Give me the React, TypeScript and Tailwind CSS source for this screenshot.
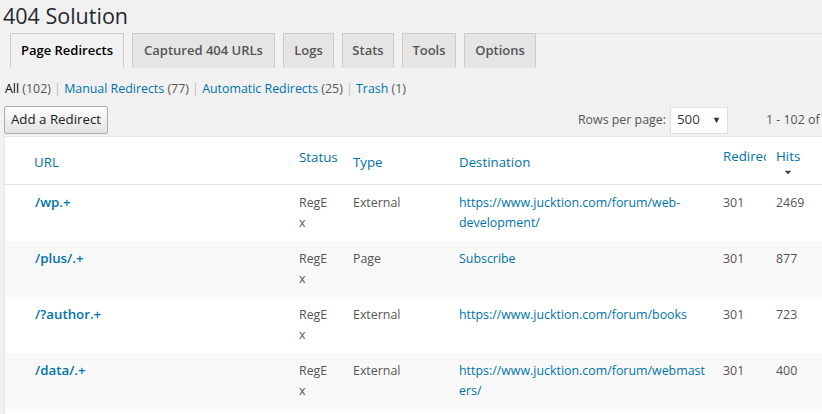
import { FaCaretDown } from "react-icons/fa";

const tabs = [
  { label: "Page Redirects", w: "w-[114px]", active: true },
  { label: "Captured 404 URLs", w: "w-[143px]" },
  { label: "Logs", w: "w-[51px]" },
  { label: "Stats", w: "w-[52px]" },
  { label: "Tools", w: "w-[54px]" },
  { label: "Options", w: "w-[72px]" },
];

const rows = [
  { url: "/wp.+", type: "External", dest: "https://www.jucktion.com/forum/web-development/", code: "301", hits: "2469" },
  { url: "/plus/.+", type: "Page", dest: "Subscribe", code: "301", hits: "877" },
  { url: "/?author.+", type: "External", dest: "https://www.jucktion.com/forum/books", code: "301", hits: "723" },
  { url: "/data/.+", type: "External", dest: "https://www.jucktion.com/forum/webmasters/", code: "301", hits: "400" },
];

const cols = "grid grid-cols-[284px_54px_106px_264px_53px_1fr]";

export default function App() {
  return (
    <div className="w-[822px] h-[414px] overflow-hidden bg-[#f1f1f1] font-['Open_Sans','Noto_Sans',sans-serif] text-[#444]">
      <h1 className="h-[33px] pl-[3px] text-[21.5px] leading-[32px] text-[#23282d]">404 Solution</h1>

      <div className="flex h-[35px] pl-[10px]">
        <div className="flex gap-[8px]">
          {tabs.map((t) => (
            <div
              key={t.label}
              className={`${t.w} flex items-center justify-center border-x border-t border-[#ccc] text-[13px] font-semibold ${
                t.active ? "bg-[#f1f1f1] text-black" : "bg-[#e5e5e5] text-[#555]"
              }`}
            >
              {t.label}
            </div>
          ))}
        </div>
        <div className="flex-1 border-t border-[#ddd]"></div>
      </div>

      <div className="mt-[11px] h-[20px] pl-[5px] text-[12.4px] leading-[20px] text-[#555]">
        <span className="text-black">All</span> (102) <span className="text-[#bbb]">|</span>{" "}
        <span className="text-[#0073aa]">Manual Redirects</span> (77) <span className="text-[#bbb]">|</span>{" "}
        <span className="text-[#0073aa]">Automatic Redirects</span> (25) <span className="text-[#bbb]">|</span>{" "}
        <span className="text-[#0073aa]">Trash</span> (1)
      </div>

      <div className="mt-[7px] flex h-[28px] items-center pl-[4px]">
        <button className="h-[28px] w-[104px] rounded-[2px] border border-[#adadad] bg-gradient-to-b from-[#fdfdfd] to-[#e2e2e2] text-[13.3px] text-[#222]">
          Add a Redirect
        </button>
        <div className="ml-auto flex items-center text-[12.4px] text-[#555]">
          <span>Rows per page:</span>
          <div className="ml-[4px] flex h-[27px] w-[58px] items-center justify-between border border-[#ddd] bg-white pl-[6px] pr-[6px] text-[13.3px] text-[#32373c]">
            <span>500</span>
            <span className="text-[9px] text-[#333]">▼</span>
          </div>
          <span className="ml-[38px] w-[56px] whitespace-nowrap">1 - 102 of</span>
        </div>
      </div>

      <div className="ml-[4px] mt-[2px] h-[300px] border-l border-t border-[#e5e5e5] bg-white">
        <div className={`${cols} h-[48px] border-b border-[#e1e1e1] text-[13.3px] leading-[20px] text-[#0073aa]`}>
          <div className="pl-[29px] pt-[15px]">URL</div>
          <div className="px-[10px] pt-[10px]">Status</div>
          <div className="px-[10px] pt-[15px]">Type</div>
          <div className="px-[10px] pt-[15px]">Destination</div>
          <div className="overflow-hidden whitespace-nowrap pl-[10px] pt-[9px]">Redirect</div>
          <div className="pl-[10px] pt-[9px]">
            <div className="inline-flex flex-col items-center">
              <span>Hits</span>
              <FaCaretDown className="mt-[1px] h-[10px] w-[10px] text-[#444]" />
            </div>
          </div>
        </div>
        {rows.map((r, i) => (
          <div
            key={r.url}
            className={`${cols} h-[56px] pt-[8px] text-[12.4px] leading-[19.5px] text-[#555] ${i % 2 === 1 ? "bg-[#f9f9f9]" : "bg-white"}`}
          >
            <div className="pl-[30px] text-[13.3px] font-semibold leading-[19.5px] text-[#0073aa]">{r.url}</div>
            <div className="break-all pl-[10px] pr-[12px]">RegEx</div>
            <div className="px-[10px]">{r.type}</div>
            <div className="break-words pl-[10px] pr-[8px] text-[#0073aa]">{r.dest}</div>
            <div className="px-[10px]">{r.code}</div>
            <div className="px-[10px]">{r.hits}</div>
          </div>
        ))}
      </div>
    </div>
  );
}
